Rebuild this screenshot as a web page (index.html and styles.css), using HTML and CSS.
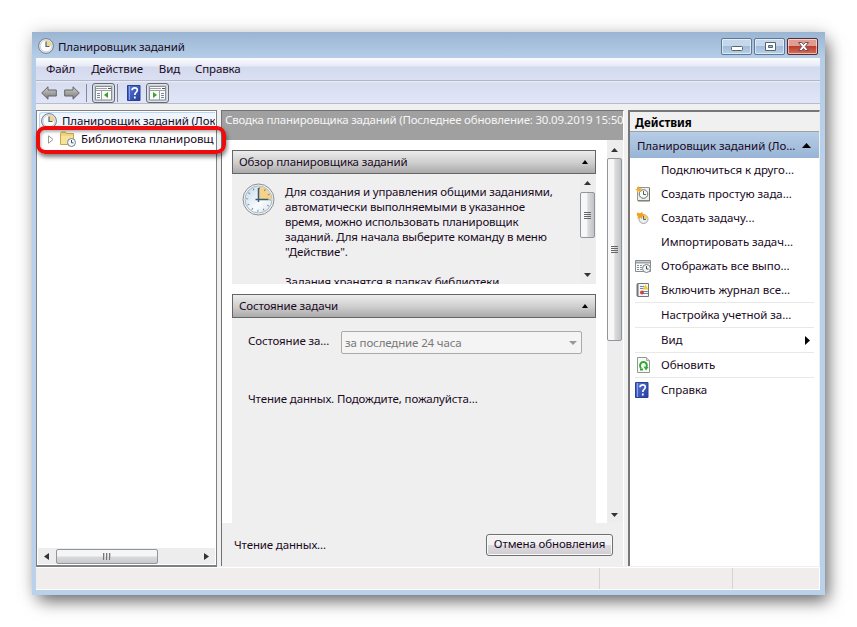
FILE: index.html
```html
<!DOCTYPE html>
<html lang="ru">

<head>
    <meta charset="UTF-8">
    <meta name="viewport" content="width=device-width, initial-scale=1.0">
    <title>Планировщик заданий</title>
    <link rel="stylesheet" href="styles.css">
</head>

<body>
    <!-- shared icons -->
    <svg class="defs" width="0" height="0">
        <defs>
            <linearGradient id="blue" x2="1" y2="1">
                <stop offset="0" stop-color="#5877d8" />
                <stop offset="1" stop-color="#263f9e" />
            </linearGradient>
            <linearGradient id="face" x2="1" y2="1">
                <stop offset="0" stop-color="#c3d9e8" />
                <stop offset=".6" stop-color="#f8fbfd" />
                <stop offset="1" stop-color="#d5e3ec" />
            </linearGradient>
            <linearGradient id="steel" x2="0" y2="1">
                <stop offset="0" stop-color="#d0d0d0" />
                <stop offset="1" stop-color="#777" />
            </linearGradient>
        </defs>
        <symbol id="clock" viewBox="0 0 16 16">
            <circle cx="8" cy="8" r="7.4" fill="#e9eef2" stroke="#777b80" />
            <circle cx="8" cy="8" r="5.8" fill="#fafcfe" stroke="#b6c3cc" stroke-width=".6" />
            <path d="M8 8V2.4A5.6 5.6 0 0 1 13.6 8z" fill="#f3d68c" />
            <path d="M8 3.5V8.5H11.5" fill="none" stroke="#4b6478" stroke-width="1.2" />
        </symbol>
        <symbol id="help" viewBox="0 0 14 16">
            <path d="M.5 .5h12.500v15H.5z" fill="url(#blue)" stroke="#294095" />
            <path d="M2.500 1v14" stroke="#8ba2ec" />
            <path d="M5 5.200C5 2 10.500 2 10.300 5.200C10.200 7.300 7.800 7.300 7.800 10M7.800 11.500v2" fill="none" stroke="#fff" stroke-width="1.700" />
        </symbol>
    </svg>

    <div class="window">
        <div class="titlebar">
            <svg class="icon16" viewBox="0 0 16 16"><use href="#clock" /></svg>
            <span class="title">Планировщик заданий</span>
            <div class="win-buttons">
                <div class="win-btn">
                    <svg width="30" height="15"><rect x="9.500" y="7.500" width="11" height="4" rx="1" fill="#fff" stroke="#59636f" /></svg>
                </div>
                <div class="win-btn">
                    <svg width="30" height="15"><path d="M10.500 3.500h10v8h-10zM13.500 6.500v2h4v-2z" fill="#fff" fill-rule="evenodd" stroke="#59636f" /></svg>
                </div>
                <div class="win-btn close">
                    <svg width="30" height="15"><path d="M10.500 3.500h3.200l1.800 2 1.800-2h3.200l-3.200 4 3.200 4h-3.200l-1.800-2-1.800 2h-3.200l3.200-4z" fill="#fff" stroke="#6b4d54" /></svg>
                </div>
            </div>
        </div>

        <div class="menubar">
            <span class="m-file">Файл</span>
            <span class="m-action">Действие</span>
            <span class="m-view">Вид</span>
            <span class="m-help">Справка</span>
        </div>

        <div class="toolbar">
            <svg class="arrow" width="16" height="14" viewBox="0 0 16 14"><path d="M.7 7L7 .8V4h8.300v6H7v3.200z" fill="url(#steel)" stroke="#666" /></svg>
            <svg class="arrow next" width="16" height="14" viewBox="0 0 16 14"><path d="M15.300 7L9 .8V4H.7v6H9v3.200z" fill="url(#steel)" stroke="#666" /></svg>
            <div class="tool-sep"></div>
            <div class="tool-btn">
                <svg width="17" height="15" viewBox="0 0 17 15"><path d="M.5 .5h16v13.500H.5z" fill="#fafafa" stroke="#8a8f94" /><path d="M1 2.500h11M1 4.500h15M6.500 5v9" stroke="#9ba0a5" /><path d="M13 2.500h3" stroke="#555" /><path d="M2 7.500h3M2 9.500h3M2 11.500h3" stroke="#789" /><path d="M13 6v6L9 9z" fill="#3ca02c" /></svg>
            </div>
            <div class="tool-sep thin"></div>
            <svg class="tool-help" width="14" height="16" viewBox="0 0 14 16"><use href="#help" /></svg>
            <div class="tool-btn">
                <svg width="17" height="15" viewBox="0 0 17 15"><path d="M.5 .5h16v13.500H.5z" fill="#fafafa" stroke="#8a8f94" /><path d="M1 2.500h11M1 4.500h15M10.500 5v9" stroke="#9ba0a5" /><path d="M13 2.500h3" stroke="#555" /><path d="M12 7.500h3M12 9.500h3M12 11.500h3" stroke="#789" /><path d="M4 6v6l4-3z" fill="#3ca02c" /></svg>
            </div>
        </div>

        <div class="workspace">
            <div class="tree">
                <div class="tree-row root">
                    <svg class="icon16" viewBox="0 0 16 16"><use href="#clock" /></svg>
                    <span>Планировщик заданий (Лок</span>
                </div>
                <div class="tree-row child">
                    <svg class="expander" width="6" height="9" viewBox="0 0 6 9"><path d="M.5 .8v7.400L5 4.500z" fill="#fff" stroke="#999" /></svg>
                    <svg class="icon16" viewBox="0 0 16 16"><path d="M.5 2.500l1-1.500h4l1 1.500h7v11H.5z" fill="#f2d680" stroke="#c9a646" /><path d="M1 5h12v8H1z" fill="#f8e29a" /><circle cx="11.500" cy="11.500" r="4" fill="#f4f8fb" stroke="#72818e" /><path d="M11.500 9v2.800h2" fill="none" stroke="#39566e" /></svg>
                    <span>Библиотека планировщ</span>
                </div>
                <div class="hscroll">
                    <svg width="5" height="7"><path d="M5 0v7L0 3.500z" fill="#333" /></svg>
                    <div class="hthumb"><i></i><i></i><i></i></div>
                    <svg width="5" height="7"><path d="M0 0v7l5-3.500z" fill="#333" /></svg>
                </div>
                <div class="highlight"></div>
            </div>

            <div class="summary">
                <div class="summary-head">Сводка планировщика заданий (Последнее обновление: 30.09.2019 15:50</div>
                <div class="summary-main">
                    <div class="sections">
                        <div class="section-head">
                            <span>Обзор планировщика заданий</span>
                            <svg width="6" height="4"><path d="M0 4h6L3 0z" /></svg>
                        </div>
                        <div class="overview">
                            <svg class="big-clock" width="33" height="33" viewBox="0 0 33 33">
                                <circle cx="16.500" cy="16.500" r="15.500" fill="#f2f4f5" stroke="#888d92" />
                                <circle cx="16.500" cy="16.500" r="13.500" fill="url(#face)" stroke="#a9b8c4" />
                                <path d="M16.500 16.500V3.500a13 13 0 0 1 13 13z" fill="#f4d28a" />
                                <circle cx="16.500" cy="16.500" r="11.300" fill="none" stroke="#75899a" stroke-width="2" stroke-dasharray="1 4.917" />
                                <path d="M16.500 5v14M13.500 16.500h13" fill="none" stroke="#395a75" stroke-width="1.500" />
                            </svg>
                            <div class="overview-text">
                                <p>Для создания и управления общими заданиями,<br>автоматически выполняемыми в указанное<br>время, можно использовать планировщик<br>заданий. Для начала выберите команду в меню<br>"Действие".</p>
                                <p>Задания хранятся в папках библиотеки</p>
                            </div>
                            <div class="vscroll">
                                <svg width="7" height="4"><path d="M0 4h7L3.500 0z" fill="#333" /></svg>
                                <div class="vthumb"><i></i><i></i><i></i><i></i></div>
                                <svg width="7" height="4"><path d="M0 0h7L3.500 4z" fill="#333" /></svg>
                            </div>
                        </div>
                        <div class="section-head">
                            <span class="status-title">Состояние задачи</span>
                            <svg width="6" height="4"><path d="M0 4h6L3 0z" /></svg>
                        </div>
                        <div class="status">
                            <div class="status-row">
                                <span class="status-label">Состояние за...</span>
                                <div class="select">
                                    <span>за последние 24 часа</span>
                                    <svg width="8" height="4"><path d="M0 0h8L4 4z" fill="#999" /></svg>
                                </div>
                            </div>
                            <p class="loading">Чтение данных. Подождите, пожалуйста...</p>
                        </div>
                    </div>
                    <div class="vscroll main">
                        <svg width="7" height="4"><path d="M0 4h7L3.500 0z" fill="#333" /></svg>
                        <div class="vthumb"><i></i><i></i><i></i><i></i></div>
                        <svg width="7" height="4"><path d="M0 0h7L3.500 4z" fill="#333" /></svg>
                    </div>
                </div>
                <div class="summary-foot">
                    <span class="reading">Чтение данных...</span>
                    <button class="cancel">Отмена обновления</button>
                </div>
            </div>

            <div class="actions">
                <div class="actions-title">Действия</div>
                <div class="actions-head">
                    <span>Планировщик заданий (Ло...</span>
                    <svg width="9" height="5"><path d="M0 5h9L4.500 0z" /></svg>
                </div>
                <ul class="action-list">
                    <li><i></i><span>Подключиться к друго...</span></li>
                    <li>
                        <svg class="icon16" viewBox="0 0 16 16"><path d="M2.500 1.500h12v13h-12z" fill="#f0efeb" stroke="#98938d" /><path d="M14.500 2v13H3" fill="none" stroke="#77726d" /><circle cx="8.500" cy="8" r="4.300" fill="#f5f9f7" stroke="#69756f" /><path d="M8.500 5v3.500H11" fill="none" stroke="#48645a" /><path d="M3.500 0l1 2.300L7 2 5.500 3.800 6.500 6 3.800 5 2 6.700 1.900 4.300 0 3.500l2.300-.8z" fill="#f3ad2a" /></svg>
                        <span>Создать простую зада...</span>
                    </li>
                    <li>
                        <svg class="icon16" viewBox="0 0 16 16"><circle cx="8.500" cy="9" r="4.500" fill="#e9f0f5" stroke="#a8a49c" /><path d="M8.500 9V4.500a4.500 4.500 0 0 1 4.500 4.500z" fill="#f4ca6a" /><path d="M2.500 2.500l2.500.7L7.500 2l.3 2.200 2.200.8-2.500 1.500L7 9 5 7.500 2.500 9l.3-2.700L1.500 4.500z" fill="#f4a11c" /><path d="M8.500 6v3.500H11" fill="none" stroke="#4d6e8a" /></svg>
                        <span>Создать задачу...</span>
                    </li>
                    <li><i></i><span>Импортировать задач...</span></li>
                    <li>
                        <svg class="icon16" viewBox="0 0 16 16"><path d="M.5 2.500h15v11H.5z" fill="#fafafa" stroke="#858b90" /><path d="M1 4.500h14" stroke="#9ca3a9" stroke-width="2" /><path d="M2 7.500h8M2 9.500h6M2 11.500h5" stroke="#899098" stroke-dasharray="2 1" /><circle cx="11.500" cy="10.500" r="4" fill="#f2f4f4" stroke="#7c8588" /><path d="M11.500 8v3h2" fill="none" stroke="#42534d" /></svg>
                        <span>Отображать все выпо...</span>
                    </li>
                    <li class="line">
                        <svg class="icon16" viewBox="0 0 16 16"><path d="M2.500 1.500h11v13h-11z" fill="#f1f5fc" stroke="#72757c" /><path d="M1 3h3M1 5h3M1 7h3M1 9h3M1 11h3M1 13h3" stroke="#777" /><path d="M5 4.500h4M5 6.500h4M8 9.500h5M8 11.500h5" stroke="#6c87ba" /><path d="M10.500 2.500l3 5h-6z" fill="#f6cc27" /><circle cx="7" cy="10.500" r="2" fill="#d34137" /></svg>
                        <span>Включить журнал все...</span>
                    </li>
                    <li class="line"><i></i><span>Настройка учетной за...</span></li>
                    <li class="line">
                        <i></i><span>Вид</span>
                        <svg class="submenu" width="5" height="9"><path d="M0 0v9l5-4.500z" /></svg>
                    </li>
                    <li class="line">
                        <svg class="icon16" viewBox="0 0 16 16"><path d="M2.500 .5h9l3 3v12h-12z" fill="#f8fcf7" stroke="#929792" /><path d="M11.500 .5v3h3" fill="#ddd" stroke="#aaa" /><path d="M6 11.500C3.500 8 6 5 8.500 5s4 2.500 3 5" fill="none" stroke="#35a535" stroke-width="2" /><path d="M8.500 9.500l5 .5-2.500 3.500z" fill="#35a535" /><path d="M5 12.500h3" stroke="#35a535" stroke-width="2" /></svg>
                        <span>Обновить</span>
                    </li>
                    <li>
                        <svg class="icon16" viewBox="0 0 16 16"><use href="#help" width="14" height="16" /></svg>
                        <span>Справка</span>
                    </li>
                </ul>
            </div>
        </div>

        <div class="statusbar">
            <div class="cell"></div>
            <div class="cell"></div>
            <div class="cell"></div>
        </div>
    </div>
</body>

</html>
```
FILE: styles.css
```css
* {
    box-sizing: border-box;
}

html,
body {
    margin: 0;
    height: 100%;
    background: #fff;
    overflow: hidden;
}

body {
    padding: 32px;
    font-family: 'Noto Sans', 'Open Sans', sans-serif;
    font-size: 11.5px;
    letter-spacing: -0.14px;
    line-height: 15px;
    color: #1a0a1e;
}

svg {
    display: block;
    flex: none;
}

.defs {
    position: absolute;
}

p,
ul {
    margin: 0;
    padding: 0;
}

span {
    white-space: nowrap;
}

.icon16 {
    width: 16px;
    height: 16px;
}

.window {
    width: 793px;
    height: 563px;
    padding: 0 5px 5px 4px;
    display: flex;
    flex-direction: column;
    background: linear-gradient(#9ab5d3, #b5cde7 26px, #b9d1ea 140px);
    box-shadow: 5px 8px 16px -2px rgba(0, 0, 0, 0.55), 0 0 16px rgba(0, 0, 0, 0.15);
}

.titlebar {
    height: 26px;
    display: flex;
    align-items: center;
    padding: 2px 2px 0;
}

.title {
    margin-left: 4px;
}

.win-buttons {
    display: flex;
    gap: 2px;
    margin-left: auto;
    margin-top: 1px;
}

.win-btn {
    width: 31px;
    height: 17px;
    border: 1px solid #5f7893;
    border-radius: 2px;
    box-shadow: inset 0 0 0 1px rgba(255, 255, 255, 0.55);
    background: linear-gradient(#c4d7eb 48%, #a0bcda 50%, #b6d0e8);
}

.win-btn.close {
    border-color: #5c2930;
    background: linear-gradient(#df9c91 46%, #bd3d2c 50%, #d3705a);
}

.menubar {
    height: 23px;
    display: flex;
    align-items: center;
    padding: 0 0 1px 10px;
    background: linear-gradient(#fbfcfe, #e7eaf6 8px, #d4daed 9px, #dae0f2);
    border-bottom: 1px solid #b1b6c8;
}

.m-action,
.m-view {
    margin-left: 16px;
}

.m-help {
    margin-left: 15px;
}

.toolbar {
    height: 23px;
    display: flex;
    align-items: center;
    padding: 2px 0 0 5px;
    background: linear-gradient(#eef0f9, #d7dcef 2px, #e1e6f7);
    border-bottom: 1px solid #b6bbd0;
}

.arrow.next {
    margin-left: 7px;
}

.tool-sep {
    width: 1px;
    height: 18px;
    margin: 0 5px 0 6px;
    background: #858a97;
}

.tool-sep.thin {
    margin: 0 9px 0 2px;
}

.tool-btn {
    width: 23px;
    height: 20px;
    display: flex;
    align-items: center;
    justify-content: center;
    border: 1px solid #666a76;
    border-radius: 3px;
    background: #c8ccd6;
    box-shadow: inset 0 0 0 1px #dfe2ea;
}

.tool-help {
    margin-right: 5px;
}

.workspace {
    height: 463px;
    display: flex;
    padding-top: 6px;
    background: #f0f0f0;
}

.tree {
    position: relative;
    width: 181px;
    height: 457px;
    display: flex;
    flex-direction: column;
    border: 1px solid #7c8087;
    border-bottom-width: 2px;
    background: #fff;
    padding: 1px;
}

.tree-row {
    height: 18px;
    display: flex;
    align-items: center;
    overflow: hidden;
}

.tree-row.root {
    margin-left: 1px;
    padding-left: 1px;
    border: 1px solid #b8d6f4;
    border-right: 0;
    border-radius: 3px 0 0 0;
    background: #eef5fc;
}

.tree-row.root span {
    margin-left: 5px;
    padding-bottom: 1px;
}

.tree-row.child {
    padding-left: 10px;
    margin-right: 1px;
    letter-spacing: -0.04px;
}

.tree-row.child span {
    padding-bottom: 1px;
}

.tree-row.child .icon16 {
    margin: 0 5px 0 6px;
}

.highlight {
    position: absolute;
    left: -1px;
    top: 15px;
    width: 190px;
    height: 28px;
    border: 4px solid #ee0b0b;
    border-radius: 9px;
    box-shadow: 1px 3px 4px rgba(0, 0, 0, 0.5), inset 1px 2px 3px rgba(0, 0, 0, 0.3);
    z-index: 2;
}

.hscroll {
    height: 16px;
    display: flex;
    align-items: center;
    margin-top: auto;
    padding: 0 6px;
    background: #ededed;
}

.hthumb,
.vthumb {
    display: flex;
    align-items: center;
    justify-content: center;
    border: 1px solid #92969b;
    border-radius: 2px;
}

.hthumb {
    width: 102px;
    height: 15px;
    gap: 1px;
    margin-left: 7px;
    margin-right: auto;
    background: linear-gradient(#f5f5f5 48%, #d9dadc 52%, #c8cacd);
}

.hthumb i {
    width: 2px;
    height: 7px;
    background: #777;
    border-right: 1px solid #ccc;
}

.vscroll {
    width: 15px;
    display: flex;
    flex-direction: column;
    align-items: center;
    padding: 7px 0 6px;
    background: #ededed;
}

.vthumb {
    width: 15px;
    height: 46px;
    flex-direction: column;
    gap: 1px;
    margin-top: 7px;
    margin-bottom: auto;
    background: linear-gradient(90deg, #f7f7f7 45%, #dcddde 52%, #c1c3c6);
}

.vthumb i {
    width: 7px;
    height: 1px;
    background: #666;
}

.vscroll.main {
    width: 16px;
    padding: 8px 1px 6px 0;
}

.main .vthumb {
    height: 183px;
    margin-top: 6px;
}

.summary {
    width: 403px;
    height: 456px;
    margin-left: 4px;
    border: solid #727272;
    border-width: 1px 0 0 1px;
    border-right: 1px solid #fff;
    display: flex;
    flex-direction: column;
}

.summary-head {
    height: 29px;
    padding: 1px 0 0 3px;
    background: #a0a0a0;
    color: #f5f5f5;
    letter-spacing: -0.2px;
    white-space: nowrap;
    overflow: hidden;
}

.summary-main {
    height: 383px;
    display: flex;
    background: #fff;
}

.sections {
    width: 385px;
    padding: 10px 11px 0 10px;
}

.section-head {
    height: 24px;
    display: flex;
    align-items: center;
    justify-content: space-between;
    padding: 0 7px 1px 6px;
    border: 1px solid #666;
    background: linear-gradient(#ececec, #d0d0d0 50%, #aaa);
}

.section-head span {
    padding-bottom: 1px;
}

.overview {
    height: 110px;
    display: flex;
    margin-bottom: 10px;
    background: #efefef;
    overflow: hidden;
}

.big-clock {
    margin: 9px 0 0 10px;
}

.overview-text {
    width: 295px;
    padding: 10px 0 0 10px;
    letter-spacing: -0.18px;
    white-space: nowrap;
}

.overview-text p {
    margin-bottom: 15px;
}

.overview .vscroll {
    margin-left: auto;
    margin-right: 1px;
    height: 110px;
    padding: 7px 0;
}

.status {
    height: 205px;
    padding: 13px 14px 0 16px;
    background: #efefef;
}

.status-row {
    display: flex;
}

.status-label {
    width: 93px;
    padding-top: 2px;
}

.select {
    width: 241px;
    height: 23px;
    display: flex;
    align-items: center;
    justify-content: space-between;
    padding: 0 4px 0 3px;
    border: 1px solid #aaa;
    border-radius: 2px;
    background: #f4f4f4;
    color: #777;
}

.loading {
    margin-top: 37px;
}

.summary-foot {
    flex: 1;
    display: flex;
    align-items: center;
    justify-content: space-between;
    padding: 0 10px 0 12px;
    background: #efefef;
}

.cancel {
    width: 127px;
    height: 22px;
    padding: 0 0 2px;
    border: 1px solid #707070;
    border-radius: 3px;
    box-shadow: inset 0 0 0 1px #fafafa;
    background: linear-gradient(#f2f2f2 48%, #dfdce0 50%, #d0cdd2);
    font: inherit;
    letter-spacing: inherit;
    color: inherit;
    white-space: nowrap;
}

.actions {
    width: 192px;
    height: 456px;
    margin-left: 4px;
    border: 1px solid #777;
    border-width: 2px 1px 0 2px;
    border-right-color: #eee;
    background: #fff;
}

.actions-title {
    height: 20px;
    padding: 3px 0 0 5px;
    border-bottom: 1px solid #a0a0a0;
    background: #f0f0f0;
    color: #000;
    font-weight: bold;
    letter-spacing: 0;
}

.actions-head {
    height: 26px;
    display: flex;
    align-items: center;
    justify-content: space-between;
    padding: 0 8px 0 7px;
    background: linear-gradient(#b7cde6, #98b4d5);
    letter-spacing: -0.06px;
}

.action-list {
    list-style: none;
    padding-right: 5px;
    letter-spacing: -0.06px;
}

.action-list li {
    height: 24px;
    display: flex;
    align-items: center;
    margin-left: 5px;
}

.action-list li.line {
    height: 25px;
    border-bottom: 1px solid #e8e8e8;
}

.action-list i {
    width: 16px;
}

.action-list span {
    margin-left: 10px;
    padding-bottom: 1px;
}

.submenu {
    margin-left: auto;
    margin-right: 4px;
}

.statusbar {
    height: 23px;
    display: flex;
    border: solid #fff;
    border-width: 1px 1px 1px 0;
    background: #f0edec;
}

.cell {
    width: 564px;
    border-right: 1px solid #d4d2d2;
}

.cell + .cell {
    width: 133px;
}

.cell:last-child {
    flex: 1;
    border: 0;
}
```
